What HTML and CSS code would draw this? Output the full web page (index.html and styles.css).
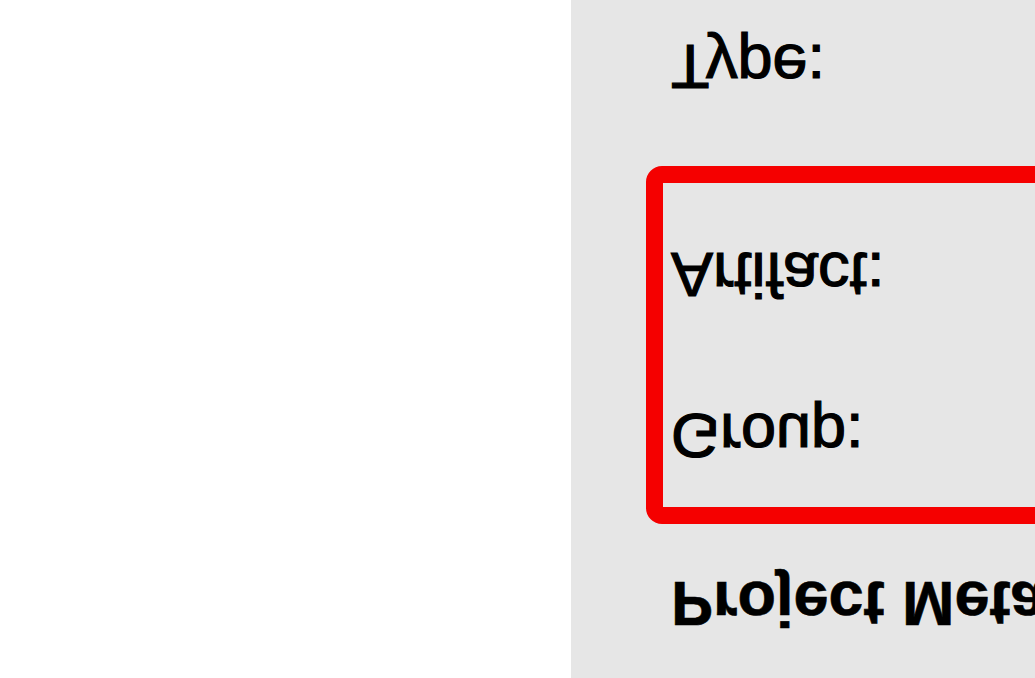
FILE: index.html
```html
<!DOCTYPE html>
<html lang="en">
<head>
<meta charset="utf-8">
<title>Project Metadata</title>
<link rel="stylesheet" href="styles.css">
</head>
<body>
  <div class="page">
    <div class="blank"></div>
    <div class="panel">
      <div class="label">Type:</div>
      <div class="highlight">
        <div class="label">Artifact:</div>
        <div class="label group">Group:</div>
      </div>
      <div class="label heading">Project Metadata</div>
    </div>
  </div>
</body>
</html>
```
FILE: styles.css
```css
html, body {
  margin: 0;
  padding: 0;
  overflow: hidden;
  background: #ffffff;
}

.page {
  display: flex;
  width: 1035px;
  height: 678px;
  overflow: hidden;
}

.blank {
  width: 571px;
  flex: none;
  background: #ffffff;
}

.panel {
  flex: 1;
  background: #e6e6e6;
  padding: 35px 0 0 100px;
  overflow: hidden;
  font-family: "Liberation Sans", Arial, sans-serif;
  color: #000;
}

.label {
  font-size: 63px;
  line-height: 63px;
  height: 63px;
  white-space: nowrap;
  transform: scaleY(-1);
  -webkit-text-stroke: 1.2px #000;
}

.highlight {
  margin: 68px -60px 0 -25px;
  border: 17px solid #f50000;
  border-radius: 16px;
  padding: 60px 0 40px 8px;
  display: flex;
  flex-direction: column;
  gap: 98px;
}

.heading {
  font-weight: bold;
  margin-top: 48px;
  -webkit-text-stroke: 0.6px #000;
}
```
